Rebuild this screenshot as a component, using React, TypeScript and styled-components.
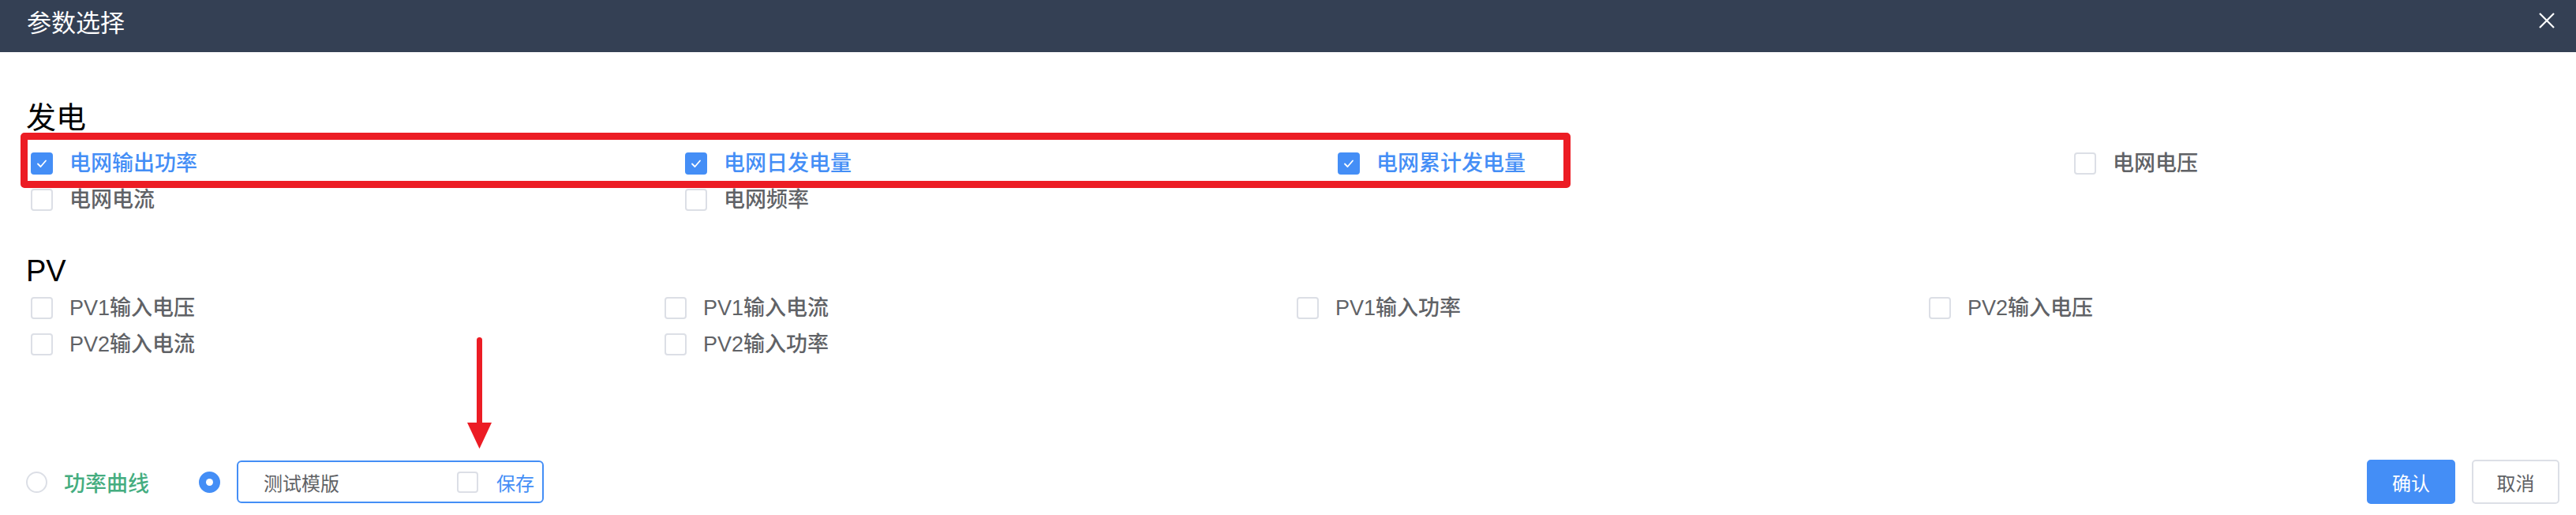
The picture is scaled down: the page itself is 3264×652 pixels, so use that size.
import { createGlobalStyle, styled } from "styled-components";

const GlobalStyle = createGlobalStyle`
  html, body {
    margin: 0;
    padding: 0;
    background: #ffffff;
  }
  body {
    font-family: "Liberation Sans", "Noto Sans CJK SC", sans-serif;
  }
`;

const BLUE = "#448ef6";
const GRAY = "#606266";

const Page = styled.div`
  position: relative;
  width: 3264px;
  height: 652px;
  display: flex;
  flex-direction: column;
  overflow: hidden;
`;

const Header = styled.div`
  height: 66px;
  box-sizing: border-box;
  background-color: #344054;
  display: flex;
  align-items: flex-start;
  justify-content: space-between;
  padding: 11px 27px 0 34px;
`;

const HeaderTitle = styled.div`
  color: #ffffff;
  font-size: 31px;
  line-height: 31px;
  font-family: "Noto Sans CJK SC", sans-serif;
`;

const CloseButton = styled.div`
  width: 20px;
  height: 20px;
  margin-top: 5px;
  display: flex;
`;

const Content = styled.div`
  flex: 1;
  display: flex;
  flex-direction: column;
  padding: 64px 21px 14px 33px;
`;

const Section = styled.div<{ $top: number }>`
  margin-top: ${(p) => p.$top}px;
`;

const SectionTitle = styled.div<{ $gap: number }>`
  font-size: 38px;
  line-height: 38px;
  height: 38px;
  color: #000000;
  margin-bottom: ${(p) => p.$gap}px;
`;

const Grid = styled.div<{ $cols: string }>`
  display: grid;
  grid-template-columns: ${(p) => p.$cols};
  grid-auto-rows: 46px;
  padding-left: 6px;
`;

const Item = styled.label`
  display: flex;
  align-items: center;
  gap: 21px;
`;

const Box = styled.span<{ $checked?: boolean; $size?: number }>`
  width: ${(p) => p.$size ?? 28}px;
  height: ${(p) => p.$size ?? 28}px;
  box-sizing: border-box;
  border-radius: 4px;
  border: 2px solid ${(p) => (p.$checked ? BLUE : "#dcdfe6")};
  background: ${(p) => (p.$checked ? BLUE : "#ffffff")};
  display: flex;
  align-items: center;
  justify-content: center;
  flex-shrink: 0;
`;

const Label = styled.span<{ $checked?: boolean }>`
  font-size: 27px;
  line-height: 28px;
  font-weight: 500;
  color: ${(p) => (p.$checked ? BLUE : GRAY)};
`;

const Footer = styled.div`
  margin-top: auto;
  height: 56px;
  display: flex;
  align-items: center;
  justify-content: space-between;
`;

const FooterLeft = styled.div`
  display: flex;
  align-items: center;
`;

const Radio = styled.span<{ $checked?: boolean }>`
  width: 27px;
  height: 27px;
  box-sizing: border-box;
  border-radius: 50%;
  border: 2px solid ${(p) => (p.$checked ? BLUE : "#dcdfe6")};
  background: ${(p) => (p.$checked ? BLUE : "#ffffff")};
  display: flex;
  align-items: center;
  justify-content: center;
  &::after {
    content: "";
    width: 9px;
    height: 9px;
    border-radius: 50%;
    background: #ffffff;
    display: ${(p) => (p.$checked ? "block" : "none")};
  }
`;

const CurveLabel = styled.span`
  font-size: 27px;
  font-weight: 500;
  color: #45ad80;
  margin: 0 63px 0 21px;
`;

const TemplateBox = styled.div`
  margin-left: 21px;
  width: 389px;
  height: 54px;
  box-sizing: border-box;
  border: 2px solid ${BLUE};
  border-radius: 6px;
  display: flex;
  align-items: center;
  padding: 0 10px 0 32px;
`;

const TemplateName = styled.span`
  flex: 1;
  font-size: 24px;
  color: ${GRAY};
`;

const SaveText = styled.span`
  font-size: 24px;
  color: ${BLUE};
  margin-left: 23px;
`;

const Buttons = styled.div`
  display: flex;
  gap: 21px;
`;

const Button = styled.div<{ $primary?: boolean }>`
  width: ${(p) => (p.$primary ? 112 : 111)}px;
  height: 56px;
  box-sizing: border-box;
  border-radius: 5px;
  border: 2px solid ${(p) => (p.$primary ? BLUE : "#dcdfe6")};
  background: ${(p) => (p.$primary ? BLUE : "#ffffff")};
  color: ${(p) => (p.$primary ? "#ffffff" : GRAY)};
  font-size: 24px;
  display: flex;
  align-items: center;
  justify-content: center;
`;

const Highlight = styled.div`
  position: absolute;
  left: 26px;
  top: 168px;
  width: 1964px;
  height: 70px;
  box-sizing: border-box;
  border: 9px solid #ec1c24;
  border-radius: 5px;
  pointer-events: none;
`;

const Arrow = styled.svg`
  position: absolute;
  left: 592px;
  top: 427px;
`;

interface IParam {
  name: string;
  checked?: boolean;
}

const power: IParam[] = [
  { name: "电网输出功率", checked: true },
  { name: "电网日发电量", checked: true },
  { name: "电网累计发电量", checked: true },
  { name: "电网电压" },
  { name: "电网电流" },
  { name: "电网频率" },
];

const pv: IParam[] = [
  { name: "PV1输入电压" },
  { name: "PV1输入电流" },
  { name: "PV1输入功率" },
  { name: "PV2输入电压" },
  { name: "PV2输入电流" },
  { name: "PV2输入功率" },
];

function Check() {
  return (
    <svg width="16" height="16" viewBox="0 0 16 16">
      <path d="M3 8.5 L6.5 12 L13 4.5" fill="none" stroke="#fff" strokeWidth="1.8" strokeLinecap="round" strokeLinejoin="round" />
    </svg>
  );
}

function ParamGrid({ items, cols }: { items: IParam[]; cols: string }) {
  return (
    <Grid $cols={cols}>
      {items.map((it) => (
        <Item key={it.name}>
          <Box $checked={it.checked}>{it.checked && <Check />}</Box>
          <Label $checked={it.checked}>{it.name}</Label>
        </Item>
      ))}
    </Grid>
  );
}

function App() {
  return (
    <Page>
      <GlobalStyle />
      <Header>
        <HeaderTitle>参数选择</HeaderTitle>
        <CloseButton>
          <svg width="20" height="20" viewBox="0 0 20 20">
            <path d="M1 1 L19 19 M19 1 L1 19" stroke="#fff" strokeWidth="2.2" />
          </svg>
        </CloseButton>
      </Header>
      <Content>
        <Section $top={0}>
          <SectionTitle $gap={16}>发电</SectionTitle>
          <ParamGrid items={power} cols="829px 827px 933px 1fr" />
        </Section>
        <Section $top={48}>
          <SectionTitle $gap={5}>PV</SectionTitle>
          <ParamGrid items={pv} cols="803px 801px 801px 1fr" />
        </Section>
        <Footer>
          <FooterLeft>
            <Radio />
            <CurveLabel>功率曲线</CurveLabel>
            <Radio $checked />
            <TemplateBox>
              <TemplateName>测试模版</TemplateName>
              <Box $size={27} />
              <SaveText>保存</SaveText>
            </TemplateBox>
          </FooterLeft>
          <Buttons>
            <Button $primary>确认</Button>
            <Button>取消</Button>
          </Buttons>
        </Footer>
      </Content>
      <Highlight />
      <Arrow width="31" height="141" viewBox="0 0 31 141">
        <line x1="15.5" y1="3.5" x2="15.5" y2="112" stroke="#ec1c24" strokeWidth="7" strokeLinecap="round" />
        <polygon points="0,108 31,108 15.5,141" fill="#ec1c24" />
      </Arrow>
    </Page>
  );
}

export default App;
